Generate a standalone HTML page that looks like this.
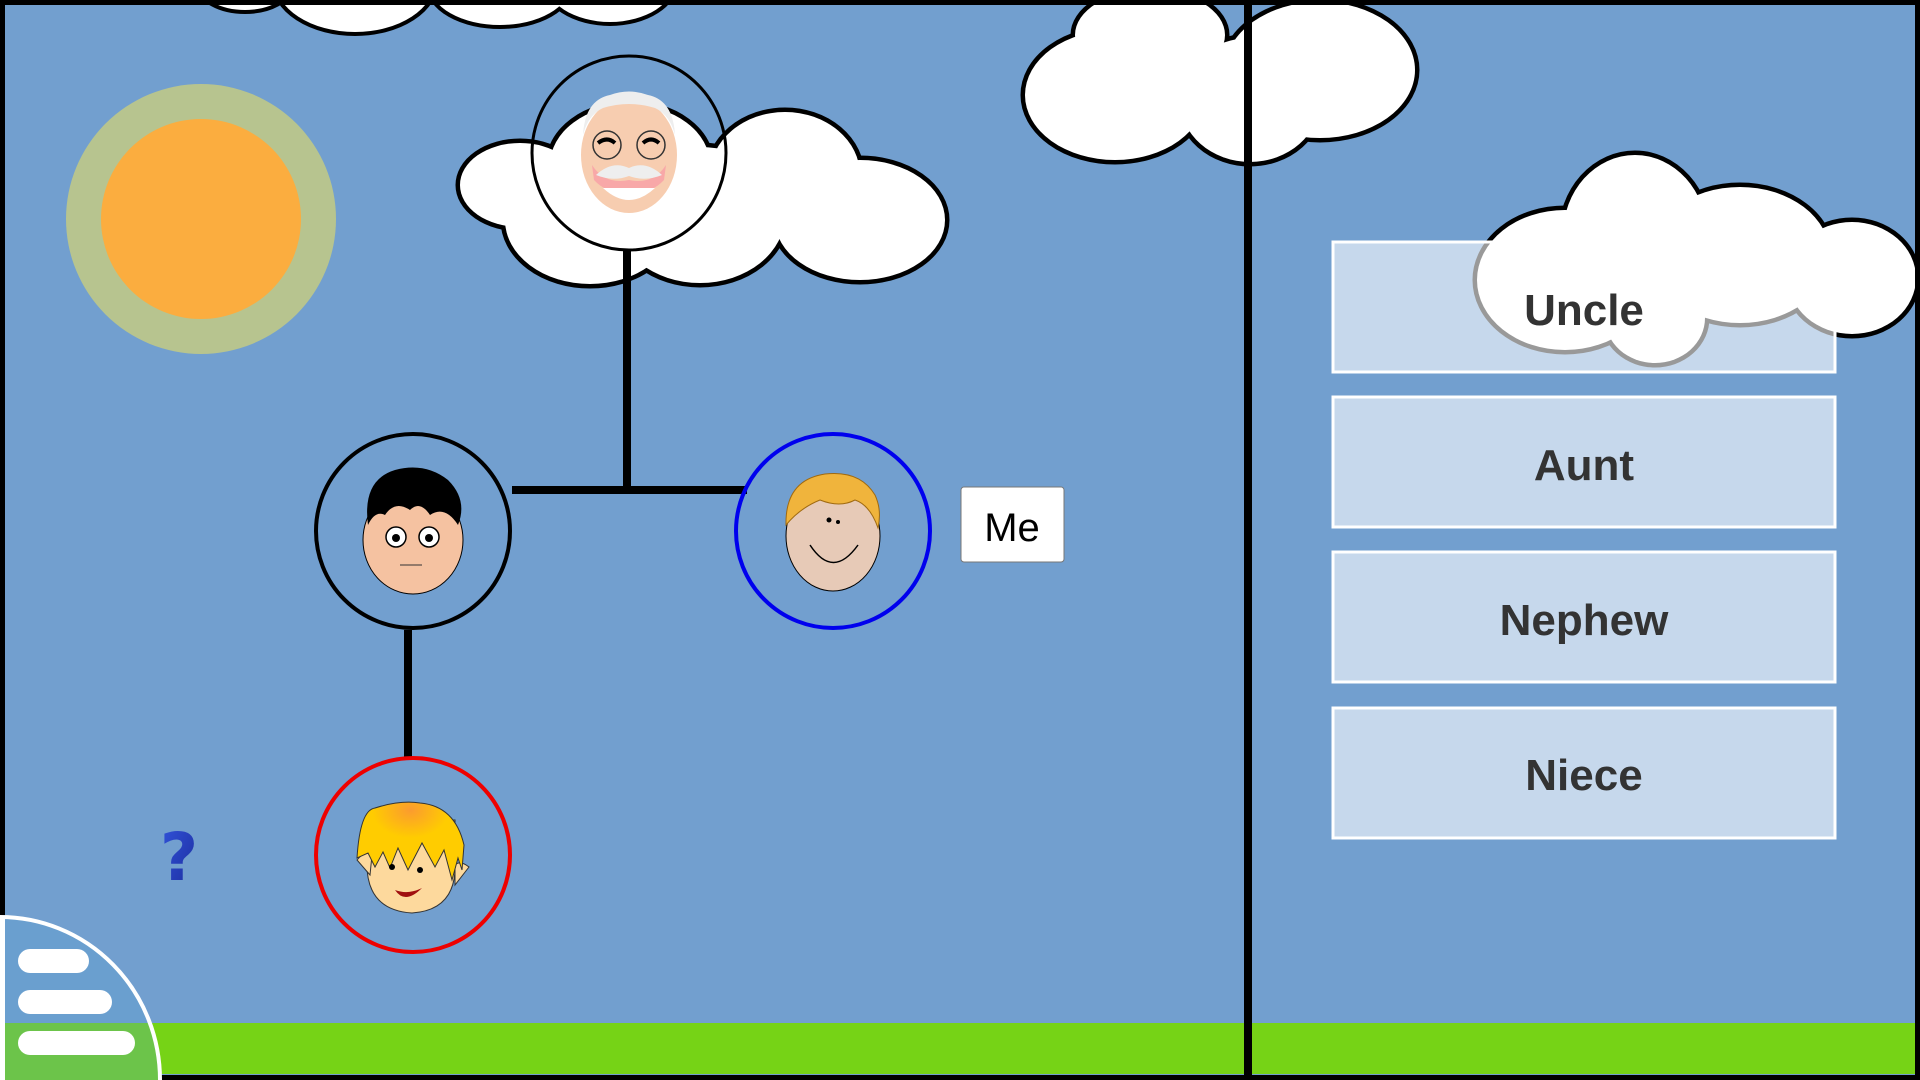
<!DOCTYPE html>
<html><head><meta charset="utf-8"><style>
html,body{margin:0;padding:0;background:#000;}
svg{display:block}
</style></head><body>
<svg width="1920" height="1080" viewBox="0 0 1920 1080" xmlns="http://www.w3.org/2000/svg">
<defs>
<radialGradient id="hair" cx="0.5" cy="0.1" r="0.6"><stop offset="0" stop-color="#fb9b2f"/><stop offset="0.6" stop-color="#ffcc00"/></radialGradient>
<linearGradient id="q" x1="0" y1="0" x2="1" y2="1"><stop offset="0" stop-color="#3355dd"/><stop offset="1" stop-color="#1a2a99"/></linearGradient>
</defs>
<rect x="0" y="0" width="1920" height="1080" fill="#000"/>
<rect x="5" y="5" width="1910" height="1070" fill="#729fcf"/>
<rect x="5" y="1023" width="1910" height="51" fill="#76d316"/>

<!-- top fragment clouds -->
<g stroke="#000" stroke-width="8">
<ellipse cx="245" cy="-15" rx="45" ry="25"/><ellipse cx="355" cy="-20" rx="80" ry="52"/><ellipse cx="500" cy="-15" rx="70" ry="40"/><ellipse cx="610" cy="-20" rx="65" ry="42"/>
</g>
<g fill="#fff">
<ellipse cx="245" cy="-15" rx="45" ry="25"/><ellipse cx="355" cy="-20" rx="80" ry="52"/><ellipse cx="500" cy="-15" rx="70" ry="40"/><ellipse cx="610" cy="-20" rx="65" ry="42"/>
</g>
<rect x="0" y="0" width="1920" height="5" fill="#000"/>

<!-- sun -->
<circle cx="201" cy="219" r="135" fill="#b7c48f"/>
<circle cx="201" cy="219" r="100" fill="#fbad3f"/>

<!-- grandpa cloud -->
<g stroke="#000" stroke-width="9">
<ellipse cx="520" cy="185" rx="60" ry="42"/><ellipse cx="590" cy="220" rx="85" ry="64"/><ellipse cx="700" cy="215" rx="85" ry="68"/><ellipse cx="785" cy="175" rx="75" ry="63"/><ellipse cx="860" cy="220" rx="85" ry="60"/><ellipse cx="630" cy="165" rx="80" ry="60"/>
</g>
<g fill="#fff">
<ellipse cx="520" cy="185" rx="60" ry="42"/><ellipse cx="590" cy="220" rx="85" ry="64"/><ellipse cx="700" cy="215" rx="85" ry="68"/><ellipse cx="785" cy="175" rx="75" ry="63"/><ellipse cx="860" cy="220" rx="85" ry="60"/><ellipse cx="630" cy="165" rx="80" ry="60"/>
</g>

<!-- right top cloud -->
<g stroke="#000" stroke-width="9">
<ellipse cx="1115" cy="95" rx="90" ry="65"/><ellipse cx="1150" cy="35" rx="75" ry="45"/><ellipse cx="1250" cy="100" rx="70" ry="62"/><ellipse cx="1320" cy="70" rx="95" ry="68"/>
</g>
<g fill="#fff">
<ellipse cx="1115" cy="95" rx="90" ry="65"/><ellipse cx="1150" cy="35" rx="75" ry="45"/><ellipse cx="1250" cy="100" rx="70" ry="62"/><ellipse cx="1320" cy="70" rx="95" ry="68"/>
</g>
<rect x="1000" y="0" width="500" height="5" fill="#000"/>

<!-- uncle cloud -->
<g stroke="#000" stroke-width="9">
<ellipse cx="1565" cy="280" rx="88" ry="70"/><ellipse cx="1635" cy="235" rx="72" ry="80"/><ellipse cx="1740" cy="255" rx="90" ry="68"/><ellipse cx="1852" cy="278" rx="64" ry="56"/><ellipse cx="1655" cy="318" rx="50" ry="45"/>
</g>
<g fill="#fff">
<ellipse cx="1565" cy="280" rx="88" ry="70"/><ellipse cx="1635" cy="235" rx="72" ry="80"/><ellipse cx="1740" cy="255" rx="90" ry="68"/><ellipse cx="1852" cy="278" rx="64" ry="56"/><ellipse cx="1655" cy="318" rx="50" ry="45"/>
</g>
<rect x="1915" y="0" width="5" height="1080" fill="#000"/>

<!-- divider -->
<rect x="1244" y="0" width="8" height="1080" fill="#000"/>

<!-- buttons -->
<g fill="#fff" fill-opacity="0.6" stroke="#fff" stroke-width="3">
<rect x="1333" y="242" width="502" height="130"/>
<rect x="1333" y="397" width="502" height="130"/>
<rect x="1333" y="552" width="502" height="130"/>
<rect x="1333" y="708" width="502" height="130"/>
</g>
<g font-family="Liberation Sans, sans-serif" font-weight="bold" font-size="44" fill="#333" text-anchor="middle">
<text x="1584" y="325">Uncle</text>
<text x="1584" y="480">Aunt</text>
<text x="1584" y="635">Nephew</text>
<text x="1584" y="790">Niece</text>
</g>

<!-- tree lines -->
<rect x="623" y="250" width="8" height="244" fill="#000"/>
<rect x="512" y="486" width="235" height="8" fill="#000"/>
<rect x="404" y="630" width="8" height="128" fill="#000"/>

<!-- grandpa -->
<circle cx="629" cy="153" r="97" fill="none" stroke="#000" stroke-width="3"/>
<ellipse cx="629" cy="155" rx="48" ry="58" fill="#f7cdb0"/>
<path d="M583 135 Q585 100 610 95 Q629 88 648 95 Q673 100 675 135 Q670 115 655 108 Q629 100 603 108 Q588 115 583 135Z" fill="#eee"/>
<circle cx="607" cy="145" r="14" fill="none" stroke="#333" stroke-width="1.5"/>
<circle cx="651" cy="145" r="14" fill="none" stroke="#333" stroke-width="1.5"/>
<path d="M598 143 Q607 136 615 143" stroke="#000" stroke-width="4" fill="none"/>
<path d="M643 143 Q651 136 659 143" stroke="#000" stroke-width="4" fill="none"/>
<path d="M592 165 Q605 185 629 180 Q653 185 666 165 L664 180 Q650 195 629 192 Q608 195 594 180Z" fill="#f8a8a8"/>
<path d="M596 175 Q612 160 629 168 Q646 160 662 175 Q645 182 629 176 Q613 182 596 175Z" fill="#eee"/>
<path d="M603 188 Q629 212 655 188Z" fill="#fff"/>

<!-- dad -->
<circle cx="413" cy="531" r="97" fill="none" stroke="#000" stroke-width="4"/>
<ellipse cx="413" cy="540" rx="50" ry="54" fill="#f5c2a1" stroke="#000" stroke-width="1"/>
<path d="M368 525 Q362 480 395 470 Q425 462 448 480 Q468 500 458 525 Q445 505 430 515 Q420 500 410 510 Q395 500 385 515 Q375 510 368 525Z" fill="#000"/>
<circle cx="396" cy="537" r="10" fill="#fff" stroke="#000" stroke-width="1.5"/>
<circle cx="429" cy="537" r="10" fill="#fff" stroke="#000" stroke-width="1.5"/>
<circle cx="396" cy="538" r="4" fill="#000"/><circle cx="429" cy="538" r="4" fill="#000"/>
<path d="M400 565 L422 565" stroke="#333" stroke-width="1"/>

<!-- me -->
<circle cx="833" cy="531" r="97" fill="none" stroke="#0000ee" stroke-width="4"/>
<ellipse cx="833" cy="536" rx="47" ry="55" fill="#e7cab7" stroke="#000" stroke-width="1"/>
<path d="M786 525 Q785 480 825 474 Q860 470 875 495 Q882 510 878 528 Q870 505 855 500 Q840 508 820 500 Q800 508 786 525Z" fill="#f0b43c" stroke="#a06a10" stroke-width="1"/>
<circle cx="829" cy="520" r="2.5" fill="#000"/><circle cx="838" cy="522" r="2" fill="#000"/>
<path d="M810 545 Q833 580 858 545" stroke="#000" stroke-width="1.5" fill="none"/>

<!-- Me label -->
<rect x="961" y="487" width="103" height="75" rx="3" fill="#fff" stroke="#777" stroke-width="1"/>
<text x="1012" y="541" font-family="Liberation Sans, sans-serif" font-size="40" text-anchor="middle" fill="#000">Me</text>

<!-- kid -->
<circle cx="413" cy="855" r="97" fill="none" stroke="#ee0000" stroke-width="4"/>
<path d="M367 860 Q365 910 412 913 Q458 910 455 860 L455 820 L367 820Z" fill="#fdd99d" stroke="#333" stroke-width="1"/>
<path d="M357 860 Q365 850 372 855 L370 875Z M469 867 Q460 860 455 865 L455 885Z" fill="#fdd99d" stroke="#333" stroke-width="1"/>
<path d="M357 858 Q360 810 375 808 Q400 800 420 803 Q455 806 464 845 L462 870 L458 858 L452 880 L444 850 L435 867 L422 843 L408 870 L398 848 L390 868 L383 852 L375 867 L368 853 Z" fill="url(#hair)" stroke="#333" stroke-width="1"/>
<circle cx="392" cy="867" r="3" fill="#000"/><circle cx="420" cy="870" r="3" fill="#000"/>
<path d="M395 890 Q405 905 422 888 Q408 895 395 890Z" fill="#a01010"/>

<!-- question mark -->
<text x="179" y="880" font-family="DejaVu Sans, sans-serif" font-weight="bold" font-size="66" text-anchor="middle" fill="url(#q)">?</text>

<!-- menu -->
<clipPath id="mc"><path d="M0 917 A160 163 0 0 1 160 1080 L0 1080Z"/></clipPath>
<g clip-path="url(#mc)">
<rect x="0" y="900" width="170" height="180" fill="#6a9fcf"/>
<rect x="0" y="1023" width="170" height="57" fill="#6cc44a"/>
</g>
<path d="M0 917 A160 163 0 0 1 160 1080" fill="none" stroke="#fff" stroke-width="4"/>
<rect x="0" y="917" width="5" height="163" fill="#fff"/>
<g fill="#fff">
<rect x="18" y="949" width="71" height="24" rx="12"/>
<rect x="18" y="990" width="94" height="24" rx="12"/>
<rect x="18" y="1031" width="117" height="24" rx="12"/>
</g>
</svg>
</body></html>
